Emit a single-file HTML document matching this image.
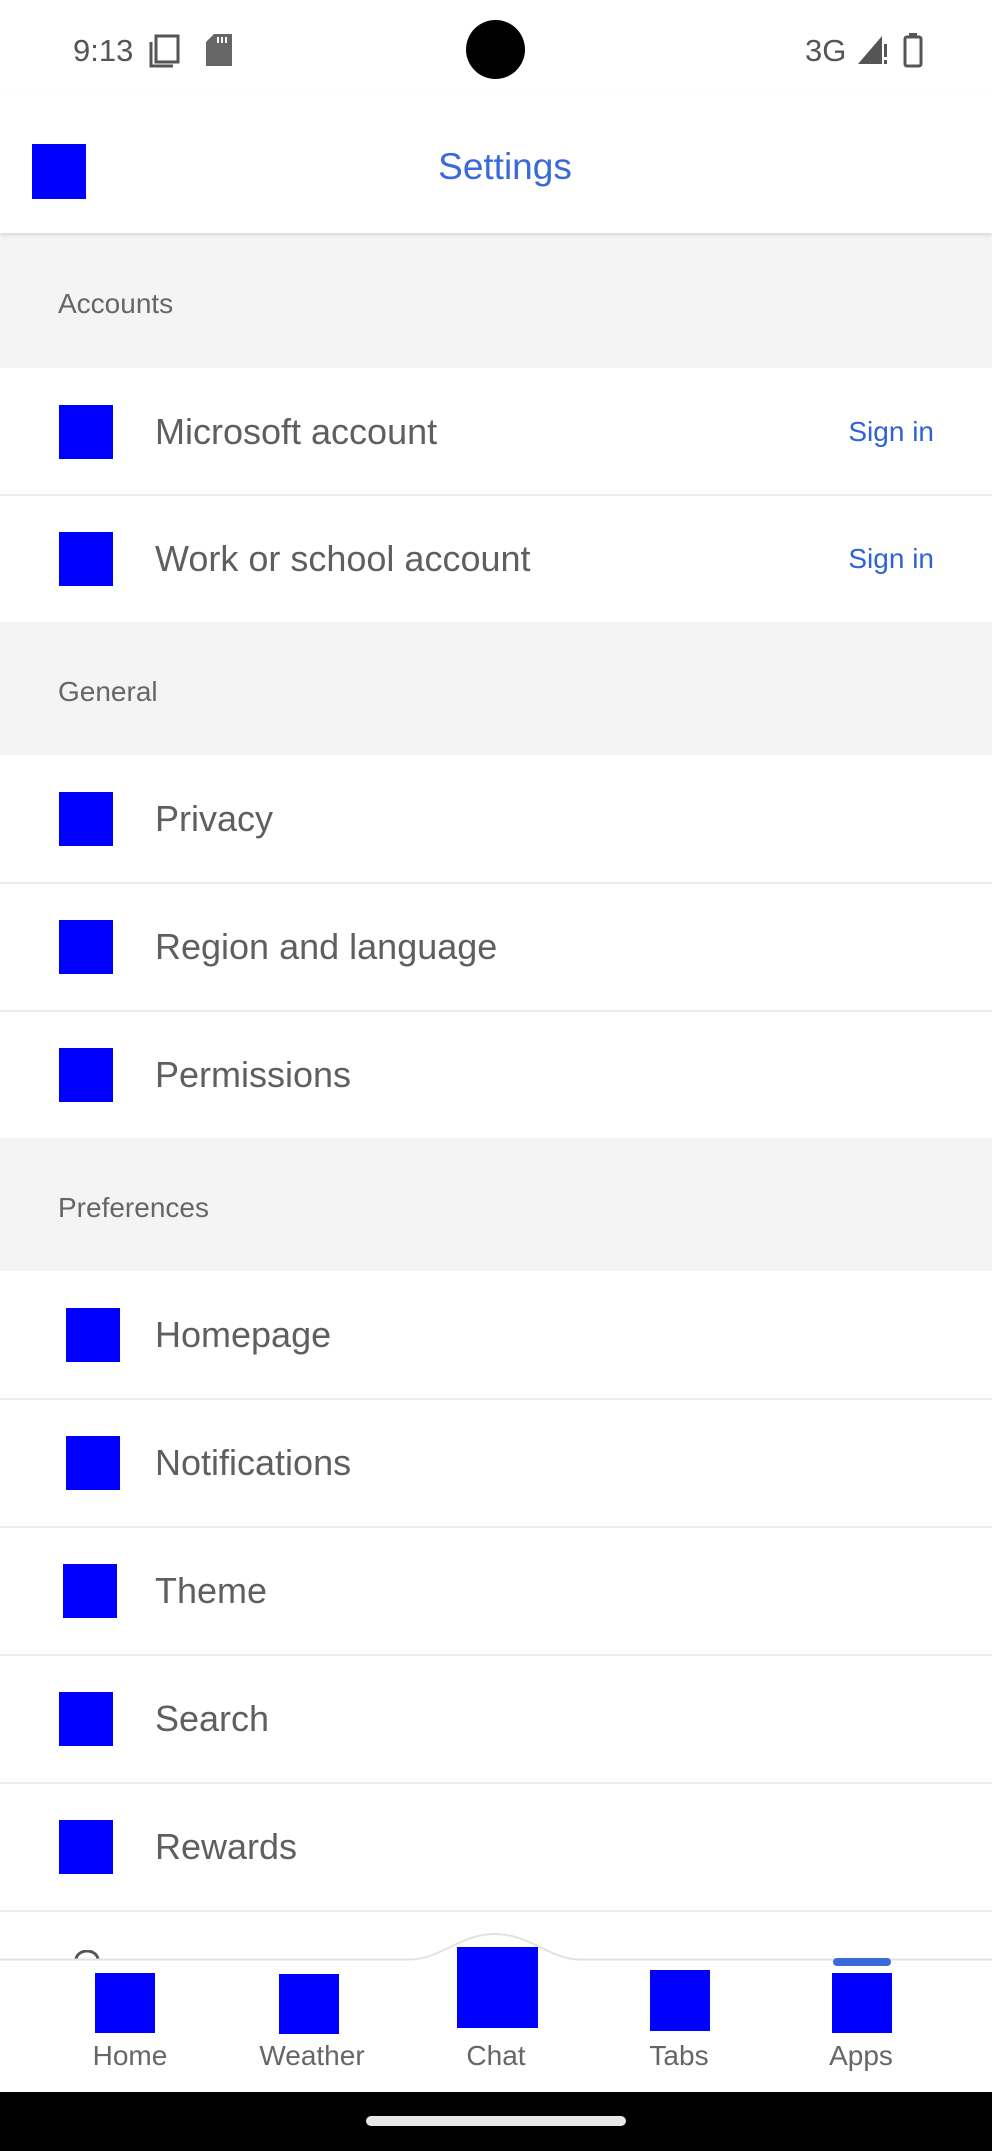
<!DOCTYPE html>
<html><head><meta charset="utf-8"><style>
*{margin:0;padding:0;box-sizing:border-box}
body{width:992px;height:2151px;position:relative;background:#fff;font-family:"Liberation Sans",sans-serif;overflow:hidden}
.a{position:absolute}
.b{background:#0000ff;position:absolute}
.sec{position:absolute;left:0;width:992px;background:#f4f4f4}
.sec span{position:absolute;left:58px;font-size:28px;color:#666;top:50%;transform:translateY(-40%)}
.row{position:absolute;left:0;width:992px;height:128px;background:#fff}
.row .t{position:absolute;left:155px;top:50%;transform:translateY(-50%);font-size:36px;color:#5f5f5f}
.row .s{position:absolute;right:58px;top:50%;transform:translateY(-50%);font-size:28px;color:#2f62d6}
.row .b{width:54px;height:54px;top:37px}
.ln{position:absolute;left:0;width:992px;height:1.5px;background:#ececec;z-index:1}
.lab{position:absolute;top:2040px;font-size:28px;color:#666;width:140px;text-align:center}
</style></head><body>
<div class="a" style="left:73px;top:33px;font-size:31px;color:#555">9:13</div>
<svg class="a" style="left:148px;top:34px" width="34" height="34" viewBox="0 0 34 34"><rect x="8" y="2" width="22" height="26" fill="none" stroke="#555" stroke-width="3"/><path d="M3 8v24h22" fill="none" stroke="#555" stroke-width="3"/></svg>
<svg class="a" style="left:206px;top:34px" width="26" height="32" viewBox="0 0 26 32"><path d="M8 0h18v32H0V8z" fill="#666"/><path d="M12 3v6M16 3v6M20 3v6" stroke="#fff" stroke-width="2"/></svg>
<div class="a" style="left:466px;top:20px;width:59px;height:59px;border-radius:50%;background:#000"></div>
<div class="a" style="left:805px;top:33px;font-size:31px;color:#555">3G</div>
<svg class="a" style="left:858px;top:34px" width="30" height="32" viewBox="0 0 30 32"><path d="M0 30L24 2v28z" fill="#555"/><rect x="26" y="10" width="3" height="13" fill="#555"/><rect x="26" y="26" width="3" height="4" fill="#555"/></svg>
<svg class="a" style="left:903px;top:32px" width="22" height="36" viewBox="0 0 22 36"><rect x="2" y="5" width="16" height="29" rx="2" fill="none" stroke="#555" stroke-width="3"/><rect x="6" y="1" width="8" height="5" fill="#555"/></svg>

<div class="a" style="left:0;top:95px;width:992px;height:138px;background:#fff;box-shadow:0 2px 4px rgba(0,0,0,.12);z-index:2"></div>
<div class="b" style="left:32px;top:144px;width:54px;height:55px;z-index:3"></div>
<div class="a" style="left:0;width:992px;text-align:center;top:146px;font-size:37px;color:#3a6ad8;z-index:3;padding-left:18px">Settings</div>

<div class="sec" style="top:233px;height:135px"><span>Accounts</span></div>
<div class="row" style="top:368px"><div class="b" style="left:59px"></div><div class="t">Microsoft account</div><div class="s">Sign in</div></div>
<div class="row" style="top:495px"><div class="b" style="left:59px"></div><div class="t">Work or school account</div><div class="s">Sign in</div></div>
<div class="sec" style="top:622px;height:133px"><span>General</span></div>
<div class="row" style="top:755px"><div class="b" style="left:59px"></div><div class="t">Privacy</div></div>
<div class="row" style="top:883px"><div class="b" style="left:59px"></div><div class="t">Region and language</div></div>
<div class="row" style="top:1011px"><div class="b" style="left:59px"></div><div class="t">Permissions</div></div>
<div class="sec" style="top:1138px;height:133px"><span>Preferences</span></div>
<div class="row" style="top:1271px"><div class="b" style="left:66px"></div><div class="t">Homepage</div></div>
<div class="row" style="top:1399px"><div class="b" style="left:66px"></div><div class="t">Notifications</div></div>
<div class="row" style="top:1527px"><div class="b" style="left:63px"></div><div class="t">Theme</div></div>
<div class="row" style="top:1655px"><div class="b" style="left:59px"></div><div class="t">Search</div></div>
<div class="row" style="top:1783px"><div class="b" style="left:59px"></div><div class="t">Rewards</div></div>
<div class="ln" style="top:494px"></div>
<div class="ln" style="top:882px"></div>
<div class="ln" style="top:1010px"></div>
<div class="ln" style="top:1398px"></div>
<div class="ln" style="top:1526px"></div>
<div class="ln" style="top:1654px"></div>
<div class="ln" style="top:1782px"></div>
<div class="ln" style="top:1910px"></div>
<svg class="a" style="left:74px;top:1950px" width="26" height="10"><path d="M2 10a11 9 0 0 1 22 0" fill="none" stroke="#555" stroke-width="3"/></svg>

<div class="a" style="left:0;top:1959px;width:992px;height:133px;background:#fff;z-index:2"></div>
<svg class="a" style="left:0;top:1925px;z-index:2" width="992" height="40"><path d="M0 34.5H410C440 34.5 460 9 495 9S550 34.5 580 34.5H992" fill="#fff" stroke="#e2e2e2" stroke-width="2"/></svg>
<div style="position:absolute;left:0;top:0;z-index:3">
<div class="b" style="left:95px;top:1973px;width:60px;height:60px"></div>
<div class="b" style="left:279px;top:1974px;width:60px;height:60px"></div>
<div class="b" style="left:457px;top:1947px;width:81px;height:81px"></div>
<div class="b" style="left:650px;top:1970px;width:60px;height:61px"></div>
<div class="b" style="left:832px;top:1973px;width:60px;height:60px"></div>
<div class="a" style="left:833px;top:1958px;width:58px;height:8px;border-radius:4px;background:#3a6ad8"></div>
<div class="lab" style="left:60px">Home</div>
<div class="lab" style="left:242px">Weather</div>
<div class="lab" style="left:426px">Chat</div>
<div class="lab" style="left:609px">Tabs</div>
<div class="lab" style="left:791px">Apps</div>
<div class="a" style="left:0;top:2092px;width:992px;height:59px;background:#000"></div>
<div class="a" style="left:366px;top:2116px;width:260px;height:10px;border-radius:5px;background:#e8e8e8"></div>
</div>
</body></html>
